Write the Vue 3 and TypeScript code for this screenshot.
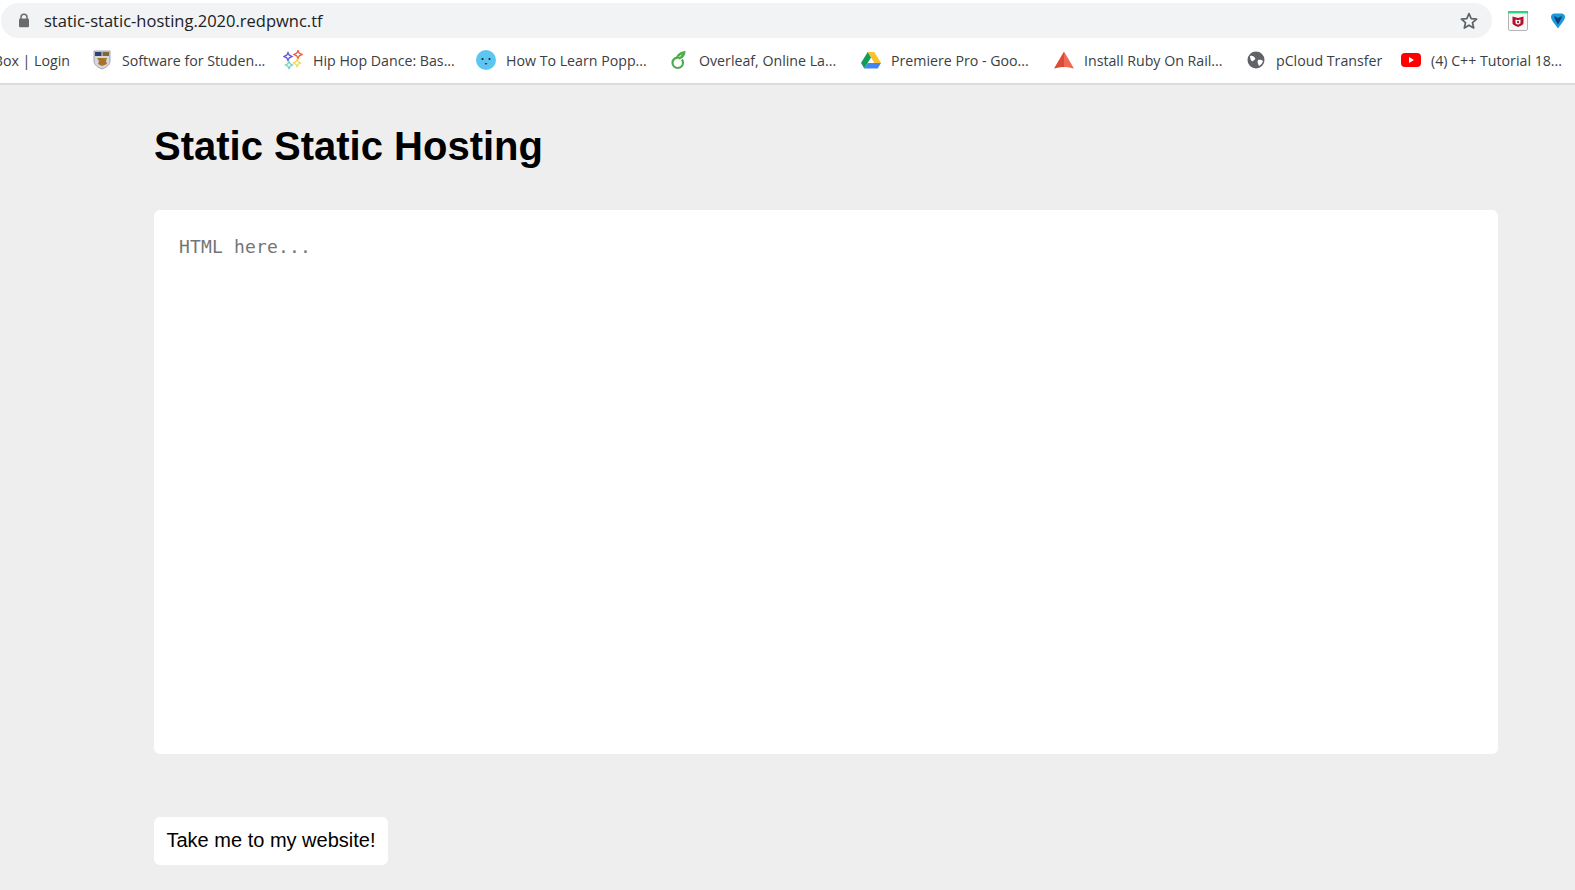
<script setup lang="ts">
import { ref } from 'vue'

const html = ref('')
</script>

<template>
  <div class="page">
    <header class="chrome">
      <div class="toolbar">
        <div class="omnibox">
          <svg class="lock" viewBox="0 0 12 15" width="12" height="15">
            <path d="M3 6V4.2a3 3 0 0 1 6 0V6" fill="none" stroke="#6a6b6d" stroke-width="1.5" />
            <rect x="1" y="5.6" width="10" height="8.6" rx="1.2" fill="#6a6b6d" />
          </svg>
          <span class="url">static-static-hosting.2020.redpwnc.tf</span>
          <svg class="star" viewBox="0 0 20 20" width="20" height="20">
            <path d="M10 2.6l2.2 5 5.4.5-4.1 3.6 1.2 5.3-4.7-2.8-4.7 2.8 1.2-5.3-4.1-3.6 5.4-.5z" fill="none" stroke="#5f6368" stroke-width="1.7" stroke-linejoin="round" />
          </svg>
        </div>
        <div class="extensions">
          <svg viewBox="0 0 20 20" width="20" height="20">
            <rect x="0.5" y="0.5" width="19" height="19" rx="1.5" fill="#f7f7f7" stroke="#b5b5b5" />
            <rect x="0" y="0" width="20" height="2.4" fill="#2fd67b" />
            <path d="M4.500 5.500L10 7l5.500-1.500V12c0 1.800-3 3-5.500 4-2.500-1-5.500-2.200-5.500-4z" fill="#b3122c" />
            <path d="M7.500 8.500l2.500.7 2.500-.7V12c0 .7-1.400 1.300-2.500 1.700-1.100-.4-2.500-1-2.500-1.700z" fill="#f7f7f7" />
            <path d="M9 10l1 .3 1-.3v1.800l-1 .5-1-.5z" fill="#b3122c" />
          </svg>
          <svg viewBox="0 0 18 20" width="18" height="20">
            <path d="M9 19.500C6 15 .5 9.500 .5 6 .5 3 3 1 5 1h8c2 0 4.500 2 4.500 5 0 3.500-5.500 9-8.500 13.500z" fill="#fff" />
            <path d="M9 17.500C6.500 13.500 2 9 2 6c0-2 1.500-3.500 3.500-3.500h7C14.500 2.500 16 4 16 6c0 3-4.500 7.500-7 11.500z" fill="#1a98d8" />
            <path d="M5 5.500c1.500 0 3 .5 4 2 1-1.500 2.500-2 4-2-1 2.500-2.500 5.500-4 8-1.500-2.500-3-5.500-4-8z" fill="#0d3f78" />
          </svg>
        </div>
      </div>

      <nav class="bookmarks">
        <a class="mark clipped"><span>Box | Login</span></a>
        <a class="mark">
          <svg viewBox="0 0 18 20" width="18" height="20">
            <path d="M1 1h16v10c0 4-4 6.500-8 8-4-1.500-8-4-8-8z" fill="#d6d8df" stroke="#8e93a3" stroke-width=".8" />
            <rect x="2" y="2" width="6.500" height="4" fill="#33406f" />
            <rect x="9.500" y="2" width="6.500" height="4" fill="#7c6a3a" />
            <path d="M4 8h10l-1 3 1 3-5 2-4-2 1-3z" fill="#a8742a" />
          </svg>
          <span>Software for Studen...</span>
        </a>
        <a class="mark">
          <svg viewBox="0 0 20 20" width="20" height="20" fill="none" stroke-width="1.300">
            <path d="M5 2.500l1.300 2.700L9 6.500 6.300 7.800 5 10.500 3.700 7.800 1 6.500l2.700-1.300z" stroke="#5b57e0" />
            <path d="M15 0.500l1.300 2.700L19 4.500l-2.700 1.300L15 8.500l-1.300-2.700L11 4.500l2.700-1.300z" stroke="#ef5a3c" />
            <path d="M6 11.500l1.200 2.300 2.300 1.200-2.300 1.200L6 18.500l-1.200-2.300L2.500 15l2.300-1.200z" stroke="#6fd0c6" />
            <path d="M14 9.500l1.200 2.300 2.300 1.200-2.300 1.200-1.200 2.300-1.200-2.300-2.300-1.200 2.300-1.200z" stroke="#f2d84e" />
          </svg>
          <span>Hip Hop Dance: Bas...</span>
        </a>
        <a class="mark">
          <svg viewBox="0 0 20 20" width="20" height="20">
            <circle cx="10" cy="10" r="10" fill="#5cc6f2" />
            <circle cx="6.500" cy="9" r="1.100" fill="#123" />
            <circle cx="13.500" cy="9" r="1.100" fill="#123" />
            <path d="M8.500 13h3l-1.500 2z" fill="#7a1f2b" />
          </svg>
          <span>How To Learn Popp...</span>
        </a>
        <a class="mark">
          <svg viewBox="0 0 20 20" width="20" height="20" fill="none">
            <path d="M11 7.800C7 6.800 3.500 9 3.500 12.800c0 3 2.400 5.200 5.200 5.200 3 0 5.300-2.300 5.300-5.200 0-1.300-.4-2.400-1.100-3.300" stroke="#4cae4c" stroke-width="2.200" />
            <path d="M6.500 9C7.500 4.500 11 1.500 16.500 1c.3 4-2.500 8-7 8.500 1-2.500 2.500-4 4-5-2.500 1-5 2.500-7 4.500z" fill="#4cae4c" />
          </svg>
          <span>Overleaf, Online La...</span>
        </a>
        <a class="mark">
          <svg viewBox="0 0 20 18" width="20" height="18">
            <path d="M6.700 1h6.600l6.700 11h-6.700z" fill="#fbc02d" />
            <path d="M6.700 1L0 12l3.300 5.500L10 6.400z" fill="#0f9d58" />
            <path d="M6.700 12H20l-3.300 5.500H3.300z" fill="#4285f4" />
          </svg>
          <span>Premiere Pro - Goo...</span>
        </a>
        <a class="mark">
          <svg viewBox="0 0 20 18" width="20" height="18">
            <path d="M10 .5L20 17.500l-7.500-1.500H10z" fill="#ee6a52" />
            <path d="M10 .5L0 17.500l7.500-1.500H10z" fill="#dd4a35" />
          </svg>
          <span>Install Ruby On Rail...</span>
        </a>
        <a class="mark">
          <svg viewBox="0 0 18 18" width="18" height="18">
            <circle cx="9" cy="9" r="8.500" fill="#5f6368" />
            <path d="M3 5c2-.5 4 .5 5 2s-1 2-2 3-3-1-3-5zM11 9c2-.5 4 0 5 1-.5 2-2 4-4 5-1-2-2-4-1-6z" fill="#fff" />
          </svg>
          <span>pCloud Transfer</span>
        </a>
        <a class="mark">
          <svg viewBox="0 0 20 14" width="20" height="14">
            <rect width="20" height="14" rx="4" fill="#f00" />
            <path d="M8 4l5 3-5 3z" fill="#fff" />
          </svg>
          <span>(4) C++ Tutorial 18...</span>
        </a>
      </nav>
    </header>

    <main class="content">
      <h1>Static Static Hosting</h1>
      <textarea v-model="html" placeholder="HTML here..." spellcheck="false"></textarea>
      <button type="button">Take me to my website!</button>
    </main>
  </div>
</template>

<style>
html,
body {
  margin: 0;
  background: #eee;
}
</style>

<style scoped>
.page {
  height: 890px;
  overflow: hidden;
  background: #eee;
}

.chrome {
  background: #fff;
  border-bottom: 2px solid #dadce0;
  height: 83px;
}

.toolbar {
  display: flex;
  align-items: center;
  height: 41px;
}

.omnibox {
  display: flex;
  align-items: center;
  height: 35px;
  width: 1491px;
  margin-left: 1px;
  padding: 0 13px 0 17px;
  box-sizing: border-box;
  background: #f1f3f4;
  border-radius: 18px;
}

.url {
  flex: 1;
  margin-left: 14px;
  font: 16.5px "Open Sans", sans-serif;
  color: #202124;
}

.extensions {
  display: flex;
  align-items: center;
  gap: 21px;
  margin-left: 16px;
}

.bookmarks {
  display: grid;
  grid-template-columns: 70px 191px 193px 193px 192px 193px 192px 155px 170px;
  align-items: center;
  height: 38px;
  overflow: hidden;
}

.mark {
  display: flex;
  align-items: center;
  gap: 10px;
  white-space: nowrap;
  font: 14.2px "Open Sans", sans-serif;
  color: #3c4043;
}

.mark svg {
  flex: none;
  width: 20px;
}

.mark:not(.clipped) {
  margin-left: 22px;
}

.clipped {
  justify-content: flex-end;
  overflow: hidden;
}

.content {
  display: flex;
  flex-direction: column;
  align-items: flex-start;
  padding: 0 77px 0 154px;
}

h1 {
  margin: 36px 0 39px;
  font: bold 40px/50px "Liberation Sans", sans-serif;
  color: #000;
}

textarea {
  display: block;
  width: 100%;
  height: 544px;
  padding: 25px;
  box-sizing: border-box;
  border: none;
  border-radius: 6px;
  outline: none;
  resize: none;
  background: #fff;
  font: 18px/24px "DejaVu Sans Mono", monospace;
  letter-spacing: 0.17px;
  color: #222;
}

textarea::placeholder {
  color: #757575;
}

button {
  margin-top: 63px;
  height: 48px;
  padding: 0 12.5px 2px;
  border: none;
  border-radius: 6px;
  background: #fff;
  font: 20px "Liberation Sans", sans-serif;
  color: #000;
}
</style>
